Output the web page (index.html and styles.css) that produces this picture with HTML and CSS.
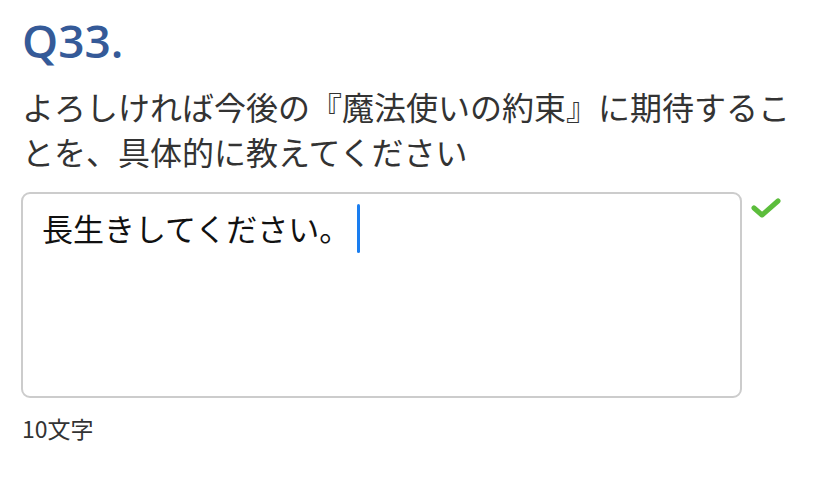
FILE: index.html
```html
<!DOCTYPE html>
<html lang="ja">
<head>
<meta charset="utf-8">
<link rel="stylesheet" href="styles.css">
</head>
<body>
<div class="question">
  <h2 class="qno">Q33.</h2>
  <p class="qtext">よろしければ今後の『魔法使いの約束』に期待することを、具体的に教えてください</p>
  <div class="answer-row">
    <div class="answer-box">長生きしてください。<span class="caret"></span></div>
    <svg class="check" width="30" height="22" viewBox="0 0 30 22"><path d="M3 11 L11 18 L27 4" fill="none" stroke="#5cbd3c" stroke-width="5" stroke-linecap="round" stroke-linejoin="round"/></svg>
  </div>
  <div class="count">10文字</div>
</div>
</body>
</html>
```
FILE: styles.css
```css
html, body { margin: 0; padding: 0; background: #fff; }
.question { padding: 9px 22px 0 21px; width: 785px; }
.qno {
  margin: 0 0 0 1px;
  font-family: "Open Sans", "Noto Sans", sans-serif;
  font-weight: 600;
  font-size: 46px;
  line-height: 62px;
  color: #355a98;
}
.qtext {
  margin: 13px 0 0 1px;
  font-family: "Noto Sans CJK JP", sans-serif;
  font-size: 32px;
  line-height: 45px;
  color: #333;
}
.answer-row { display: flex; align-items: flex-start; margin-top: 18px; }
.answer-box {
  width: 678px;
  height: 182px;
  border: 2px solid #cccccc;
  border-radius: 9px;
  padding: 10px 20px 10px 19px;
  font-family: "Noto Sans CJK JP", sans-serif;
  font-size: 31px;
  line-height: 44px;
  color: #111;
}
.caret {
  display: inline-block;
  width: 3px;
  height: 49px;
  background: #1a7ef0;
  vertical-align: -12px;
  margin-left: 7px;
  border-radius: 2px;
}
.check { margin: 5px 0 0 9px; }
.count {
  margin: 15px 0 0 1px;
  font-family: "Noto Sans CJK JP", sans-serif;
  font-size: 23px;
  line-height: 30px;
  color: #333;
}
```
